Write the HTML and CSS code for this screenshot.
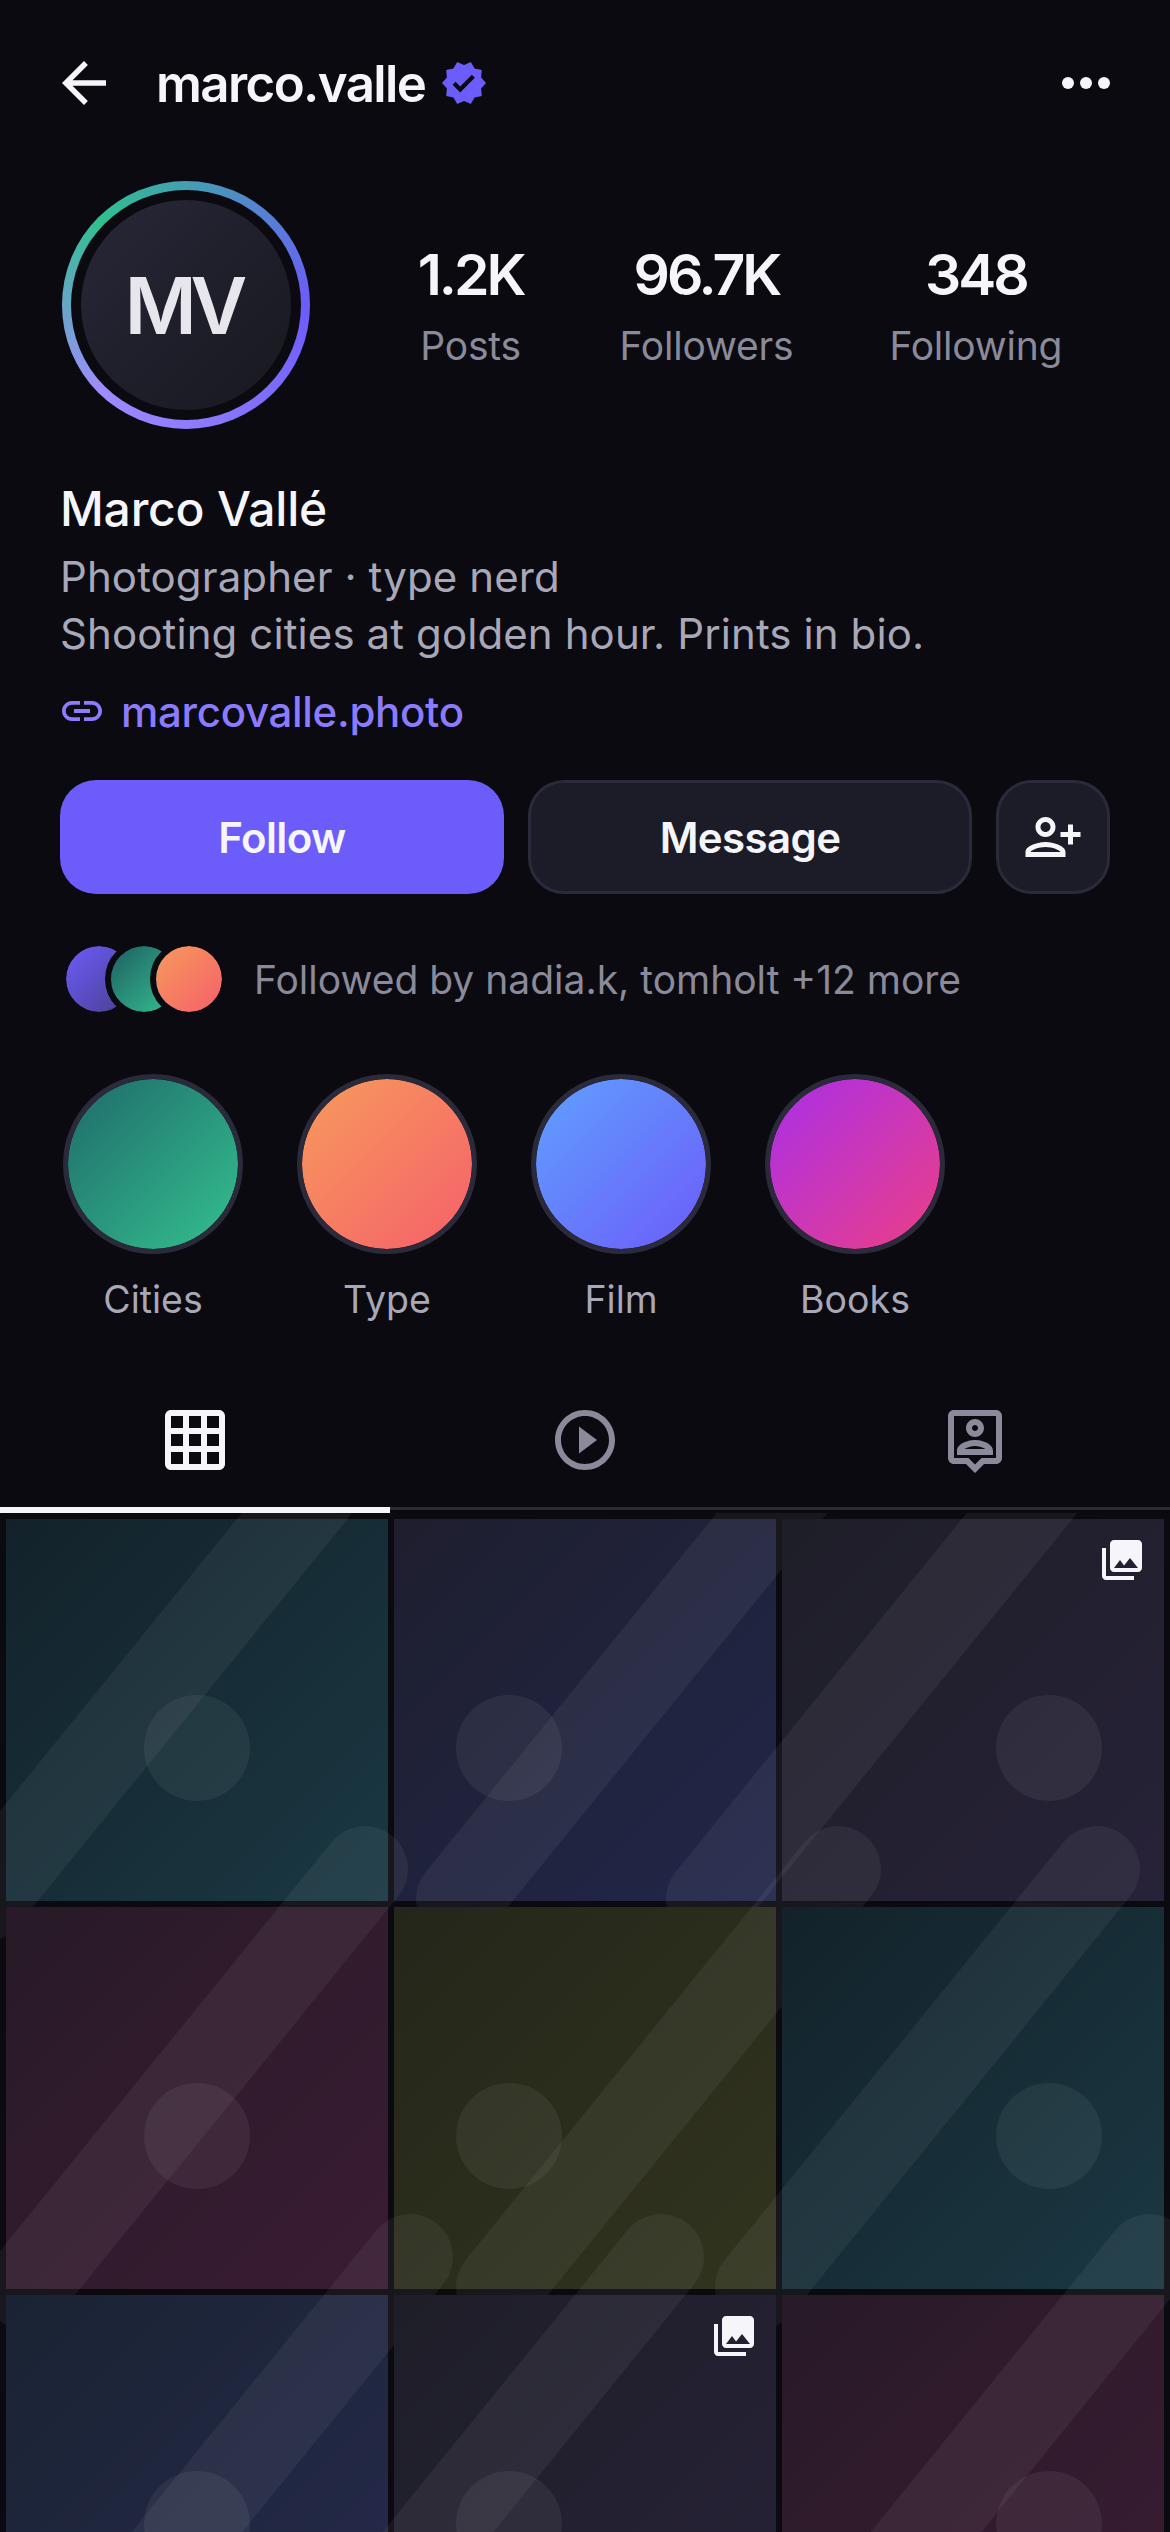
FILE: index.html
```html
<!DOCTYPE html>
<html lang="en">
<head>
    <meta charset="UTF-8">
    <meta name="viewport" content="width=device-width, initial-scale=1.0">
    <title>marco.valle</title>
    <link rel="stylesheet" href="styles.css">
</head>
<body>
    <header class="topbar">
        <svg class="back-icon" viewBox="0 0 24 24"><path d="M20 11H7.83l5.59-5.59L12 4l-8 8 8 8 1.41-1.41L7.83 13H20v-2z"/></svg>
        <h1 class="username">marco.valle</h1>
        <svg class="verified-icon" viewBox="0 0 24 24"><path fill-rule="evenodd" d="M23 12l-2.44-2.79.34-3.69-3.61-.82-1.89-3.2L12 2.96 8.6 1.5 6.71 4.69 3.1 5.5l.34 3.7L1 12l2.44 2.79-.34 3.7 3.61.82L8.6 22.5l3.4-1.47 3.4 1.46 1.89-3.19 3.61-.82-.34-3.69L23 12zm-12.91 4.72l-3.8-3.81 1.48-1.48 2.32 2.33 5.85-5.87 1.48 1.48-7.33 7.35z"/></svg>
        <svg class="more-icon" viewBox="0 0 24 24"><circle cx="6" cy="12" r="2"/><circle cx="12" cy="12" r="2"/><circle cx="18" cy="12" r="2"/></svg>
    </header>

    <section class="profile">
        <div class="summary">
            <div class="avatar-ring">
                <div class="avatar-gap">
                    <div class="avatar">MV</div>
                </div>
            </div>
            <div class="stats">
                <div class="stat"><span class="stat-value">1.2K</span><span class="stat-label">Posts</span></div>
                <div class="stat"><span class="stat-value">96.7K</span><span class="stat-label">Followers</span></div>
                <div class="stat"><span class="stat-value">348</span><span class="stat-label">Following</span></div>
            </div>
        </div>

        <h2 class="full-name">Marco Vallé</h2>
        <p class="bio">Photographer · type nerd<br>Shooting cities at golden hour. Prints in bio.</p>
        <div class="site-link">
            <svg class="link-icon" viewBox="0 0 24 24"><path d="M3.9 12c0-1.71 1.39-3.1 3.1-3.1h4V7H7c-2.76 0-5 2.24-5 5s2.24 5 5 5h4v-1.9H7c-1.71 0-3.1-1.39-3.1-3.1zM8 13h8v-2H8v2zm9-6h-4v1.9h4c1.71 0 3.1 1.39 3.1 3.1s-1.39 3.1-3.1 3.1h-4V17h4c2.76 0 5-2.24 5-5s-2.24-5-5-5z"/></svg>
            <span>marcovalle.photo</span>
        </div>

        <div class="actions">
            <button class="btn btn-primary">Follow</button>
            <button class="btn btn-dark">Message</button>
            <button class="btn btn-dark btn-icon">
                <svg viewBox="0 0 24 24"><path d="M13 8c0-2.21-1.79-4-4-4S5 5.79 5 8s1.79 4 4 4 4-1.79 4-4zm-2 0c0 1.1-.9 2-2 2s-2-.9-2-2 .9-2 2-2 2 .9 2 2zM1 18v2h16v-2c0-2.66-5.33-4-8-4s-8 1.34-8 4zm2 0c.2-.71 3.3-2 6-2 2.69 0 5.78 1.28 6 2H3zm17-3v-3h3v-2h-3V7h-2v3h-3v2h3v3h2z"/></svg>
            </button>
        </div>

        <div class="followed">
            <div class="faces">
                <span class="face face-purple"></span>
                <span class="face face-green"></span>
                <span class="face face-orange"></span>
            </div>
            <span class="followed-text">Followed by nadia.k, tomholt +12 more</span>
        </div>

        <div class="highlights">
            <div class="highlight"><div class="highlight-circle grad-green"></div><span>Cities</span></div>
            <div class="highlight"><div class="highlight-circle grad-orange"></div><span>Type</span></div>
            <div class="highlight"><div class="highlight-circle grad-blue"></div><span>Film</span></div>
            <div class="highlight"><div class="highlight-circle grad-magenta"></div><span>Books</span></div>
        </div>
    </section>

    <nav class="tabs">
        <div class="tab tab-active">
            <svg viewBox="0 0 24 24"><path d="M20 2H4c-1.1 0-2 .9-2 2v16c0 1.1.9 2 2 2h16c1.1 0 2-.9 2-2V4c0-1.1-.9-2-2-2zM8 20H4v-4h4v4zm0-6H4v-4h4v4zm0-6H4V4h4v4zm6 12h-4v-4h4v4zm0-6h-4v-4h4v4zm0-6h-4V4h4v4zm6 12h-4v-4h4v4zm0-6h-4v-4h4v4zm0-6h-4V4h4v4z"/></svg>
        </div>
        <div class="tab">
            <svg viewBox="0 0 24 24"><path d="M10 16.5l6-4.5-6-4.5v9zM12 2C6.48 2 2 6.48 2 12s4.48 10 10 10 10-4.48 10-10S17.52 2 12 2zm0 18c-4.41 0-8-3.59-8-8s3.59-8 8-8 8 3.59 8 8-3.59 8-8 8z"/></svg>
        </div>
        <div class="tab">
            <svg viewBox="0 0 24 24"><path d="M19 2H5c-1.11 0-2 .9-2 2v14c0 1.1.89 2 2 2h4l3 3 3-3h4c1.1 0 2-.9 2-2V4c0-1.1-.9-2-2-2zm0 16h-4.83l-.59.59L12 20.17l-1.59-1.59-.58-.58H5V4h14v14zm-7-7c1.65 0 3-1.35 3-3s-1.35-3-3-3-3 1.35-3 3 1.35 3 3 3zm0-4c.55 0 1 .45 1 1s-.45 1-1 1-1-.45-1-1 .45-1 1-1zm6 8.58c0-2.5-3.97-3.58-6-3.58s-6 1.08-6 3.58V17h12v-1.42zM8.48 15c.74-.51 2.23-1 3.52-1s2.78.49 3.52 1H8.48z"/></svg>
        </div>
    </nav>

    <section class="grid">
        <div class="tile tile-teal">
            <svg class="tile-art" viewBox="0 0 382 382"><line x1="317" y1="-38" x2="-22" y2="380"/><circle cx="191" cy="229" r="53"/></svg>
        </div>
        <div class="tile tile-indigo">
            <svg class="tile-art" viewBox="0 0 382 382"><line x1="404" y1="-38" x2="65" y2="380"/><circle cx="115" cy="229" r="53"/></svg>
        </div>
        <div class="tile tile-slate">
            <svg class="tile-art" viewBox="0 0 382 382"><line x1="266" y1="-38" x2="-73" y2="380"/><circle cx="267" cy="229" r="53"/></svg>
            <svg class="multi-icon" viewBox="0 0 24 24"><path d="M22 16V4c0-1.1-.9-2-2-2H8c-1.1 0-2 .9-2 2v12c0 1.1.9 2 2 2h12c1.1 0 2-.9 2-2zm-11-4l2.03 2.71L16 11l4 5H8l3-4zM2 6v14c0 1.1.9 2 2 2h14v-2H4V6H2z"/></svg>
        </div>
        <div class="tile tile-wine">
            <svg class="tile-art" viewBox="0 0 382 382"><line x1="359" y1="-38" x2="20" y2="380"/><circle cx="191" cy="229" r="53"/></svg>
        </div>
        <div class="tile tile-olive">
            <svg class="tile-art" viewBox="0 0 382 382"><line x1="444" y1="-38" x2="105" y2="380"/><circle cx="115" cy="229" r="53"/></svg>
        </div>
        <div class="tile tile-teal">
            <svg class="tile-art" viewBox="0 0 382 382"><line x1="315" y1="-38" x2="-24" y2="380"/><circle cx="267" cy="229" r="53"/></svg>
        </div>
        <div class="tile tile-navy">
            <svg class="tile-art" viewBox="0 0 382 382"><line x1="404" y1="-38" x2="65" y2="380"/><circle cx="191" cy="229" r="53"/></svg>
        </div>
        <div class="tile tile-slate">
            <svg class="tile-art" viewBox="0 0 382 382"><line x1="267" y1="-38" x2="-72" y2="380"/><circle cx="115" cy="229" r="53"/></svg>
            <svg class="multi-icon" viewBox="0 0 24 24"><path d="M22 16V4c0-1.1-.9-2-2-2H8c-1.1 0-2 .9-2 2v12c0 1.1.9 2 2 2h12c1.1 0 2-.9 2-2zm-11-4l2.03 2.71L16 11l4 5H8l3-4zM2 6v14c0 1.1.9 2 2 2h14v-2H4V6H2z"/></svg>
        </div>
        <div class="tile tile-wine">
            <svg class="tile-art" viewBox="0 0 382 382"><line x1="367" y1="-38" x2="28" y2="380"/><circle cx="267" cy="229" r="53"/></svg>
        </div>
    </section>
</body>
</html>
```

FILE: styles.css
```css
* {
  box-sizing: border-box;
}

html, body {
  margin: 0;
  height: 2532px;
  overflow: hidden;
}

body {
  width: 1170px;
  background-color: #0a0a10;
  color: #f5f5fa;
  font-family: "Inter", "Liberation Sans", sans-serif;
}

svg {
  display: block;
  fill: currentColor;
}

/* top bar */
.topbar {
  display: flex;
  align-items: center;
  height: 166px;
  padding: 0 48px 0 51px;
}

.back-icon {
  width: 66px;
  height: 66px;
  margin-right: 39px;
}

.username {
  margin: 0;
  font-size: 51px;
  font-weight: 600;
  letter-spacing: -1.6px;
}

.verified-icon {
  width: 48px;
  height: 48px;
  margin-left: 15px;
  color: #6c5cf9;
}

.more-icon {
  width: 72px;
  height: 72px;
  margin-left: auto;
}

/* profile */
.profile {
  padding: 15px 60px 0;
}

.summary {
  display: flex;
  align-items: center;
}

.avatar-ring {
  flex: none;
  width: 248px;
  height: 248px;
  margin-left: 2px;
  padding: 9px;
  border-radius: 50%;
  background: conic-gradient(from 315deg, #2fc08f, #6c5cf9 135deg, #a08cff 270deg, #2fc08f 360deg);
}

.avatar-gap {
  width: 100%;
  height: 100%;
  padding: 10px;
  border-radius: 50%;
  background-color: #0a0a10;
}

.avatar {
  display: flex;
  align-items: center;
  justify-content: center;
  width: 100%;
  height: 100%;
  border-radius: 50%;
  background: linear-gradient(135deg, #272738, #18181f);
  color: #e6e6ec;
  font-size: 78px;
  font-weight: 600;
  letter-spacing: -6px;
  text-indent: -6px;
}

.stats {
  flex: 1;
  display: flex;
  justify-content: center;
  gap: 96px;
  margin: 2px 0 0 60px;
}

.stat {
  display: flex;
  flex-direction: column;
  align-items: center;
}

.stat-value {
  font-size: 57px;
  font-weight: 600;
  line-height: 66px;
  letter-spacing: -3px;
}

.stat-label {
  margin-top: 14px;
  color: #8a8a9a;
  font-size: 39px;
  line-height: 48px;
  letter-spacing: -0.2px;
}

.full-name {
  margin: 51px 0 0;
  font-size: 48px;
  font-weight: 500;
  line-height: 57px;
  letter-spacing: -0.2px;
}

.bio {
  margin: 11px 0 0;
  color: #a8a8b8;
  font-size: 42px;
  line-height: 57px;
  letter-spacing: 0.1px;
}

.site-link {
  display: flex;
  align-items: center;
  gap: 15px;
  height: 48px;
  margin-top: 25px;
  color: #8b7bff;
  font-size: 42px;
  font-weight: 500;
  letter-spacing: -0.3px;
}

.link-icon {
  width: 48px;
  height: 48px;
  margin-left: -2px;
}

.actions {
  display: flex;
  gap: 24px;
  margin-top: 45px;
}

.btn {
  flex: 1 1 0;
  height: 114px;
  padding: 0;
  border: 3px solid transparent;
  border-radius: 36px;
  color: #f5f5fa;
  font-family: inherit;
  font-size: 42px;
  font-weight: 600;
  letter-spacing: -0.6px;
}

.btn-primary {
  background-color: #6c5cf9;
}

.btn-dark {
  background-color: #1c1c28;
  border-color: #2a2a3a;
}

.btn-icon {
  flex: none;
  display: flex;
  align-items: center;
  justify-content: center;
  width: 114px;
}

.btn-icon svg {
  width: 60px;
  height: 60px;
}

.followed {
  display: flex;
  align-items: center;
  margin-top: 46px;
}

.faces {
  display: flex;
  margin-right: 26px;
}

.face {
  width: 78px;
  height: 78px;
  border: 6px solid #0a0a10;
  border-radius: 50%;
  background-clip: padding-box;
}

.face + .face {
  margin-left: -33px;
}

.face-purple {
  background-image: linear-gradient(135deg, #6c5cf9, #4a3f8f);
}

.face-green {
  background-image: linear-gradient(135deg, #1f5f63, #34c08f);
}

.face-orange {
  background-image: linear-gradient(135deg, #f79a5c, #f5606a);
}

.followed-text {
  color: #8a8a9a;
  font-size: 39px;
}

.highlights {
  display: flex;
  gap: 54px;
  margin: 56px 0 0 3px;
}

.highlight {
  display: flex;
  flex-direction: column;
  align-items: center;
  width: 180px;
  color: #a8a8b8;
  font-size: 37.5px;
  line-height: 48px;
}

.highlight span {
  margin-top: 22px;
}

.highlight-circle {
  width: 180px;
  height: 180px;
  border: 5px solid #2a2a3a;
  border-radius: 50%;
  background-clip: padding-box;
}

.grad-green {
  background-image: linear-gradient(135deg, #1f6a6a, #34c08f);
}

.grad-orange {
  background-image: linear-gradient(135deg, #f79a5c, #f5606a);
}

.grad-blue {
  background-image: linear-gradient(135deg, #5fa0ff, #6c5cf9);
}

.grad-magenta {
  background-image: linear-gradient(135deg, #a92fe8, #ec3f85);
}

/* tabs */
.tabs {
  display: flex;
  margin-top: 42px;
  border-bottom: 3px solid #2a2a3a;
}

.tab {
  position: relative;
  flex: 1;
  display: flex;
  justify-content: center;
  padding: 38px 0 31px;
  color: #8a8a9a;
}

.tab svg {
  width: 72px;
  height: 72px;
}

.tab-active {
  color: #f5f5fa;
}

.tab-active::after {
  content: "";
  position: absolute;
  left: 0;
  right: 0;
  bottom: -6px;
  z-index: 1;
  height: 6px;
  background-color: #f5f5fa;
}

/* post grid */
.grid {
  display: grid;
  grid-template-columns: repeat(3, 382px);
  grid-auto-rows: 382px;
  gap: 6px;
  margin-top: 3px;
  padding: 6px;
  overflow: hidden;
}

.tile {
  position: relative;
  z-index: 0;
}

.tile-teal {
  background: linear-gradient(135deg, #13222a, #1a3843);
}

.tile-indigo {
  background: linear-gradient(135deg, #1e1e2e, #21274a);
}

.tile-navy {
  background: linear-gradient(135deg, #1a2333, #252a4b);
}

.tile-slate {
  background: linear-gradient(135deg, #1e1e28, #272238);
}

.tile-wine {
  background: linear-gradient(135deg, #281a28, #3a1c32);
}

.tile-olive {
  background: linear-gradient(135deg, #24261a, #31341e);
}

.tile-art {
  position: absolute;
  inset: 0;
  width: 100%;
  height: 100%;
  overflow: visible;
}

.tile-art line {
  stroke: rgba(255, 255, 255, 0.055);
  stroke-width: 86;
  stroke-linecap: round;
}

.tile-art circle {
  fill: rgba(255, 255, 255, 0.06);
}

.multi-icon {
  position: absolute;
  top: 17px;
  right: 18px;
  width: 48px;
  height: 48px;
}
```
